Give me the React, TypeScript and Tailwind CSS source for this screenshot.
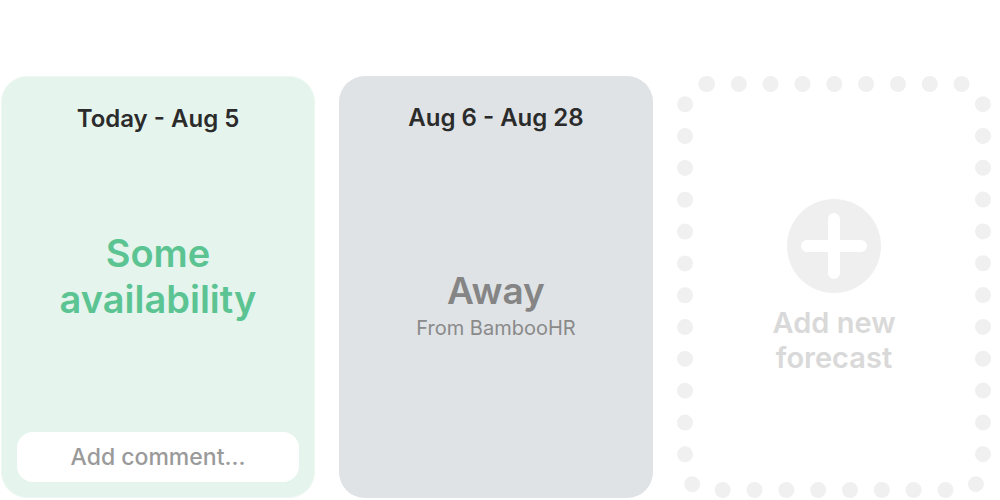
import React from 'react';

const font = { fontFamily: 'Inter, "Noto Sans", sans-serif' };

function PeriodCard({ title, className = '', children }: { title: string; className?: string; children: React.ReactNode }) {
  return (
    <div className={`w-[314px] h-[422px] rounded-[26px] flex flex-col ${className}`}>
      <div className="pt-[28px] text-center text-[24px] leading-[28px] font-semibold text-[#2b2b2b]">{title}</div>
      {children}
    </div>
  );
}

export default function App() {
  return (
    <div className="w-[1000px] h-[500px] bg-white overflow-hidden" style={font}>
      <div className="flex gap-6 pt-[76px] pl-[1px]">
        <PeriodCard title="Today - Aug 5" className="bg-[#e5f5ed] border border-[#edf8f2]">
          <div className="flex-1 flex items-center justify-center pb-[14px]">
            <div className="text-center text-[38px] leading-[46px] font-semibold text-[#5cc492]">
              Some
              <br />
              availability
            </div>
          </div>
          <div className="mx-[15px] mb-[15px] h-[50px] rounded-2xl bg-white flex items-center justify-center text-[23px] font-medium text-[#9a9a9a]">
            Add comment...
          </div>
        </PeriodCard>

        <PeriodCard title="Aug 6 - Aug 28" className="bg-[#dfe3e6]">
          <div className="flex-1 flex flex-col items-center justify-center pb-[19px]">
            <div className="text-[37px] leading-[44px] font-semibold text-[#858585]">Away</div>
            <div className="mt-[1px] text-[20px] leading-[28px] text-[#8a8a8a]">From BambooHR</div>
          </div>
        </PeriodCard>

        <div className="w-[314px] h-[422px] rounded-[30px] border-[16px] border-dotted border-[#f0f0f0] flex flex-col items-center justify-center">
          <div className="w-[94px] h-[94px] rounded-full bg-[#efefef] flex items-center justify-center">
            <svg width="66" height="66" viewBox="0 0 66 66">
              <path d="M33 6v54M6 33h54" stroke="#ffffff" strokeWidth="12" strokeLinecap="round" />
            </svg>
          </div>
          <div className="mt-[12px] text-center text-[29px] leading-[35px] font-semibold text-[#d9d9d9]">
            Add new
            <br />
            forecast
          </div>
        </div>
      </div>
    </div>
  );
}
